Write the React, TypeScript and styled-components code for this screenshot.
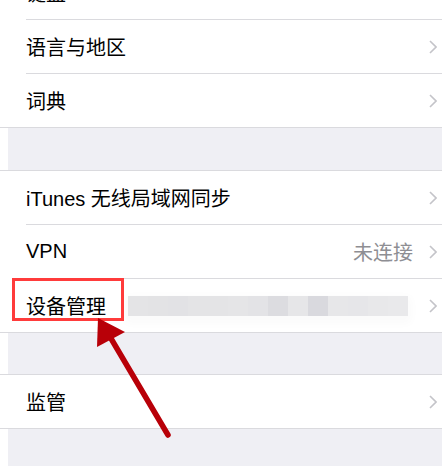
import styled, { createGlobalStyle } from "styled-components";

const GlobalStyle = createGlobalStyle`
  html, body {
    margin: 0;
    padding: 0;
    background: #ffffff;
  }
  body {
    font-family: "Liberation Sans", "Noto Sans CJK SC", sans-serif;
    -webkit-font-smoothing: antialiased;
  }
`;

const Page = styled.div`
  position: relative;
  width: 442px;
  height: 466px;
  overflow: hidden;
  background: #ffffff;
`;

const List = styled.div`
  margin-left: 8px;
  margin-top: -34px;
  background: #efeff4;
  display: flex;
  flex-direction: column;
  height: 500px;
`;

const Group = styled.div<{ $gap?: number }>`
  margin-top: ${(p) => p.$gap ?? 0}px;
  background: #ffffff;
  border-top: ${(p) => (p.$gap ? "1px solid #dadade" : "none")};
  border-bottom: 1px solid #dadade;
  margin-left: -8px;
  padding-left: 8px;
`;

const Row = styled.div<{ $last?: boolean }>`
  height: 53px;
  margin-left: 18px;
  padding-right: 5px;
  display: flex;
  align-items: center;
  border-bottom: ${(p) => (p.$last ? "none" : "1px solid #dadade")};
  box-sizing: content-box;
`;

const Label = styled.span`
  font-size: 20px;
  color: #000000;
  white-space: nowrap;
  flex: none;
`;

const Detail = styled.span`
  margin-left: auto;
  font-size: 20px;
  color: #8e8e93;
  white-space: nowrap;
`;

const Chevron = styled.svg`
  flex: none;
  width: 8px;
  height: 14px;
  margin-left: 16px;
`;

const Mosaic = styled.div`
  margin-left: 22px;
  width: 280px;
  height: 20px;
  flex: none;
  display: flex;
  border-radius: 2px;
  box-shadow: 0 4px 8px 4px #fbfbfb;
`;

const Tile = styled.div<{ $c: string }>`
  flex: 1;
  background: ${(p) => p.$c};
`;

const Spacer = styled.div`
  flex: 1;
`;

const Highlight = styled.div`
  position: absolute;
  left: 12px;
  top: 278px;
  width: 106px;
  height: 37px;
  border: 3px solid #ff3b3b;
  pointer-events: none;
`;

const ArrowLayer = styled.svg`
  position: absolute;
  left: 0;
  top: 0;
  pointer-events: none;
`;

const ChevronIcon = () => (
  <Chevron viewBox="0 0 8 14">
    <path d="M1 1l6 6-6 6" fill="none" stroke="#c4c4c9" strokeWidth="1.6" />
  </Chevron>
);

const tiles = [
  "#e4e4e6", "#e3e3e5", "#e2e2e5", "#e4e4e6", "#e4e4e6", "#e5e5e7", "#e3e3e6",
  "#dcdce0", "#e6e6e8", "#d9d9de", "#e7e7e9", "#e6e6e9", "#e8e8ea", "#e9e9eb",
];

export default function App() {
  return (
    <Page>
      <GlobalStyle />
      <List>
        <Group>
          <Row>
            <Label>键盘</Label>
            <Spacer />
            <ChevronIcon />
          </Row>
          <Row>
            <Label>语言与地区</Label>
            <Spacer />
            <ChevronIcon />
          </Row>
          <Row $last>
            <Label>词典</Label>
            <Spacer />
            <ChevronIcon />
          </Row>
        </Group>
        <Group $gap={42}>
          <Row>
            <Label>iTunes 无线局域网同步</Label>
            <Spacer />
            <ChevronIcon />
          </Row>
          <Row>
            <Label>VPN</Label>
            <Detail>未连接</Detail>
            <ChevronIcon />
          </Row>
          <Row $last>
            <Label>设备管理</Label>
            <Mosaic>
              {tiles.map((c, i) => (
                <Tile key={i} $c={c} />
              ))}
            </Mosaic>
            <Spacer />
            <ChevronIcon />
          </Row>
        </Group>
        <Group $gap={41}>
          <Row $last>
            <Label>监管</Label>
            <Spacer />
            <ChevronIcon />
          </Row>
        </Group>
      </List>
      <Highlight />
      <ArrowLayer width="442" height="466" viewBox="0 0 442 466">
        <line x1="168" y1="435" x2="106" y2="330" stroke="#b80008" strokeWidth="5.5" strokeLinecap="round" />
        <polygon points="98,318 125,332 97,347" fill="#b80008" />
      </ArrowLayer>
    </Page>
  );
}
